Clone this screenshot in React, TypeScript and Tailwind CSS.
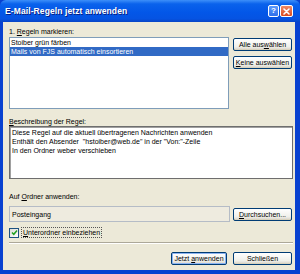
import React from 'react';

const font = "font-['Liberation_Sans','Arial',sans-serif]";

const XpButton: React.FC<{ children: React.ReactNode; w: string; def?: boolean }> = ({ children, w, def }) => (
  <div
    className={`${w} h-[13px] flex items-center justify-center rounded-[2px] border border-[#003C74] bg-[linear-gradient(#FFFFFF,#F0F0EA_70%,#D6D0C5)] text-[7px] leading-[9px] text-black ${
      def ? 'shadow-[inset_0_0_0_1px_#8CB4F2]' : 'shadow-[inset_0_-1px_0_#D8D2BD]'
    }`}
  >
    <span className="whitespace-pre">{children}</span>
  </div>
);

const U: React.FC<{ children: React.ReactNode }> = ({ children }) => <span className="underline underline-offset-1">{children}</span>;

export default function App() {
  return (
    <div className={`${font} w-[300px] h-[274px] flex flex-col bg-[#0841D0] overflow-hidden`}>
      {/* title bar */}
      <div className="h-[22px] shrink-0 flex items-center pl-[5px] pr-[7px] rounded-t-[6px] bg-[linear-gradient(#3D8FF9,#0A62EC_18%,#0357E8_55%,#0553E2_85%,#0845C6)]">
        <span className="text-[8.5px] font-bold text-white [text-shadow:1px_1px_0_#0A1E80] tracking-[0.1px]">
          E-Mail-Regeln jetzt anwenden
        </span>
        <div className="ml-auto flex gap-[1px]">
          <div className="w-[11px] h-[12px] rounded-[2px] border border-white bg-[linear-gradient(#5C9BFC,#2E6FEA)] flex items-center justify-center text-white text-[8px] font-bold leading-none">
            ?
          </div>
          <div className="w-[13px] h-[12px] rounded-[2px] border border-white bg-[linear-gradient(#F08A66,#D94A20)] flex items-center justify-center">
            <svg width="7" height="7" viewBox="0 0 7 7">
              <path d="M1 1 L6 6 M6 1 L1 6" stroke="white" strokeWidth="1.6" strokeLinecap="round" />
            </svg>
          </div>
        </div>
      </div>

      {/* body */}
      <div className="flex-1 ml-[3px] mr-[5px] mb-[4px] bg-[#ECE9D8] pl-[6px] pr-[2px] pt-[5px] flex flex-col text-[7px] leading-[9px] text-black">
        <div className="h-[9px]">
          1. <U>R</U>egeln markieren:
        </div>
        <div className="mt-[1px] flex gap-[4px]">
          <div className="w-[220px] h-[72px] border border-[#7F9DB9] bg-white">
            <div className="h-[9px] pl-[1px]">Stoiber grün färben</div>
            <div className="h-[9px] pl-[1px] bg-[#316AC5] text-white">Mails von FJS automatisch einsortieren</div>
          </div>
          <div className="flex flex-col gap-[5px] pt-[1px]">
            <XpButton w="w-[59px]">
              Alle aus<U>w</U>ählen
            </XpButton>
            <XpButton w="w-[59px]">
              <U>K</U>eine auswählen
            </XpButton>
          </div>
        </div>

        <div className="mt-[8px] h-[9px]">
          <U>B</U>eschreibung der Regel:
        </div>
        <div className="w-[284px] h-[53px] border border-[#6E6E6E] shadow-[inset_1px_1px_0_#A0A0A0] bg-white pl-[2px] pt-[1px]">
          <div>Diese Regel auf die aktuell übertragenen Nachrichten anwenden</div>
          <div>Enthält den Absender &nbsp;"hstoiber@web.de" in der "Von:"-Zeile</div>
          <div>In den Ordner weber verschieben</div>
        </div>

        <div className="mt-[13px] h-[9px]">
          Auf <U>O</U>rdner anwenden:
        </div>
        <div className="mt-[5px] flex items-center gap-[3px]">
          <div className="w-[221px] h-[16px] border border-[#B5BCC6] bg-[#EEEBDF] flex items-center pl-[2px]">
            Posteingang
          </div>
          <XpButton w="w-[59px]">
            <U>D</U>urchsuchen...
          </XpButton>
        </div>

        <div className="mt-[5px] h-[11px] flex items-center gap-[2px]">
          <div className="w-[10px] h-[10px] border border-[#1C5180] bg-[linear-gradient(135deg,#DCDCD7,#FFFFFF)] flex items-center justify-center">
            <svg width="7" height="7" viewBox="0 0 7 7">
              <path d="M1 3.5 L2.8 5.3 L6 1.5" stroke="#21A121" strokeWidth="1.5" fill="none" />
            </svg>
          </div>
          <div className="h-[11px] border border-dotted border-[#555] px-[1px] flex items-center">
            <span className="whitespace-pre">
              <U>U</U>nterordner einbeziehen
            </span>
          </div>
        </div>

        <div className="mt-[4px] w-[284px] border-t border-[#ACA899] border-b border-b-white" />

        <div className="mt-[8px] flex justify-end gap-[6px] pr-[1px]">
          <XpButton w="w-[56px]" def>
            Jetzt <U>a</U>nwenden
          </XpButton>
          <XpButton w="w-[59px]">Schließen</XpButton>
        </div>
      </div>
    </div>
  );
}
